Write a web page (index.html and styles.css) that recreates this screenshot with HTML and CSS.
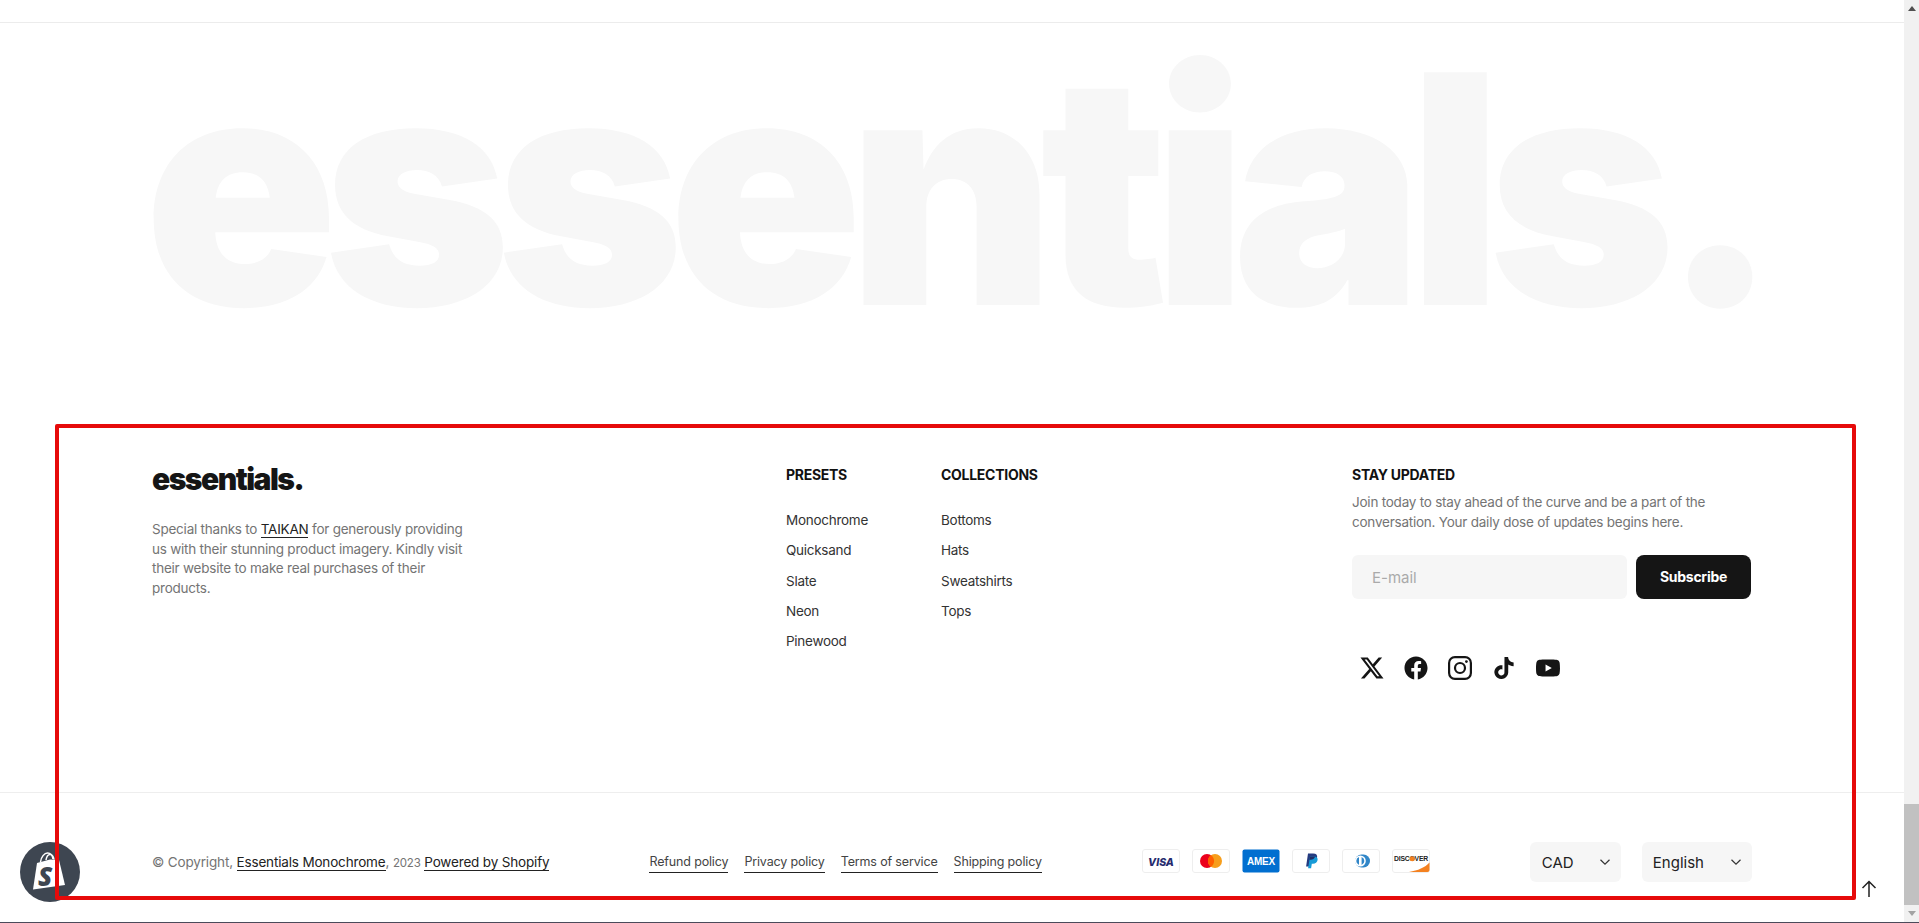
FILE: index.html
```html
<!DOCTYPE html>
<html lang="en">
<head>
<meta charset="utf-8">
<title>Essentials Monochrome</title>
<link rel="stylesheet" href="styles.css">
</head>
<body>
<div class="window">
  <main class="page">
    <div class="top-strip"></div>
    <section class="hero"><div class="hero-word">essentials.</div></section>
    <footer class="footer">
      <div class="footer-main">
        <div class="brand">
          <div class="logo">essentials.</div>
          <p class="muted brand-copy">Special thanks to <a class="link-u" href="#">TAIKAN</a> for generously providing us with their stunning product imagery. Kindly visit their website to make real purchases of their products.</p>
        </div>
        <nav class="menus">
          <div class="menu">
            <h3 class="heading">PRESETS</h3>
            <ul class="menu-list">
              <li><a href="#">Monochrome</a></li>
              <li><a href="#">Quicksand</a></li>
              <li><a href="#">Slate</a></li>
              <li><a href="#">Neon</a></li>
              <li><a href="#">Pinewood</a></li>
            </ul>
          </div>
          <div class="menu">
            <h3 class="heading">COLLECTIONS</h3>
            <ul class="menu-list">
              <li><a href="#">Bottoms</a></li>
              <li><a href="#">Hats</a></li>
              <li><a href="#">Sweatshirts</a></li>
              <li><a href="#">Tops</a></li>
            </ul>
          </div>
        </nav>
        <div class="news">
          <h3 class="heading">STAY UPDATED</h3>
          <p class="muted news-copy">Join today to stay ahead of the curve and be a part of the conversation. Your daily dose of updates begins here.</p>
          <form class="news-form">
            <input class="news-input" type="email" placeholder="E-mail">
            <button class="news-btn" type="button">Subscribe</button>
          </form>
          <div class="social">
            <svg class="s-icon" viewBox="-.5 -.5 25 25"><path d="M18.901 1.153h3.68l-8.04 9.19L24 22.846h-7.406l-5.8-7.584-6.638 7.584H.474l8.6-9.83L0 1.154h7.594l5.243 6.932ZM17.61 20.644h2.039L6.486 3.24H4.298Z"/></svg>
            <svg class="s-icon" viewBox="-.5 -.5 25 25"><path d="M24 12.073c0-6.627-5.373-12-12-12s-12 5.373-12 12c0 5.99 4.388 10.954 10.125 11.854v-8.385H7.078v-3.47h3.047V9.43c0-3.007 1.792-4.669 4.533-4.669 1.312 0 2.686.235 2.686.235v2.953H15.83c-1.491 0-1.956.925-1.956 1.874v2.25h3.328l-.532 3.47h-2.796v8.385C19.612 23.027 24 18.062 24 12.073z"/></svg>
            <svg class="s-icon" viewBox="0 0 24 24"><rect class="ig-line" x="1.100" y="1.100" width="21.800" height="21.800" rx="5.800"/><circle class="ig-line" cx="12" cy="12" r="5"/><circle cx="18.400" cy="5.600" r="1.400"/></svg>
            <svg class="s-icon" viewBox="-1 -.5 26 25"><path d="M12.525.02c1.31-.02 2.61-.01 3.91-.02.08 1.53.63 3.09 1.75 4.17 1.12 1.11 2.7 1.62 4.24 1.79v4.03c-1.44-.05-2.89-.35-4.2-.97-.57-.26-1.1-.59-1.62-.93-.01 2.92.01 5.84-.02 8.75-.08 1.4-.54 2.79-1.35 3.94-1.31 1.92-3.58 3.17-5.91 3.21-1.43.08-2.86-.31-4.08-1.03-2.02-1.19-3.44-3.37-3.65-5.71-.02-.5-.03-1-.01-1.49.18-1.9 1.12-3.72 2.58-4.96 1.66-1.44 3.98-2.13 6.15-1.72.02 1.48-.04 2.96-.04 4.44-.99-.32-2.15-.23-3.02.37-.63.41-1.11 1.04-1.36 1.75-.21.51-.15 1.07-.14 1.61.24 1.64 1.82 3.02 3.5 2.87 1.12-.01 2.19-.66 2.77-1.61.19-.33.4-.67.41-1.06.1-1.79.06-3.57.07-5.36.01-4.03-.01-8.05.02-12.07z"/></svg>
            <svg class="s-icon" viewBox="0 0 24 24"><path d="M23.498 6.186a3.016 3.016 0 0 0-2.122-2.136C19.505 3.545 12 3.545 12 3.545s-7.505 0-9.377.505A3.017 3.017 0 0 0 .502 6.186C0 8.070 0 12 0 12s0 3.930.502 5.814a3.016 3.016 0 0 0 2.122 2.136c1.871.505 9.376.505 9.376.505s7.505 0 9.377-.505a3.015 3.015 0 0 0 2.122-2.136C24 15.930 24 12 24 12s0-3.930-.502-5.814zM9.545 15.568V8.432L15.818 12l-6.273 3.568z"/></svg>
          </div>
        </div>
      </div>
      <div class="footer-bottom">
        <div class="copyright muted">© Copyright, <a class="link-u" href="#">Essentials Monochrome</a>, <span class="year">2023</span> <a class="link-u" href="#">Powered by Shopify</a></div>
        <div class="policies">
          <a class="link-u" href="#">Refund policy</a>
          <a class="link-u" href="#">Privacy policy</a>
          <a class="link-u" href="#">Terms of service</a>
          <a class="link-u" href="#">Shipping policy</a>
        </div>
        <div class="payments">
          <svg class="card" viewBox="0 0 38 24"><rect class="card-bg" x=".5" y=".5" width="37" height="23" rx="2.5"/><text class="visa" x="19" y="16.500" text-anchor="middle">VISA</text></svg>
          <svg class="card" viewBox="0 0 38 24"><rect class="card-bg" x=".5" y=".5" width="37" height="23" rx="2.5"/><circle cx="15" cy="12" r="7" fill="#eb001b"/><circle cx="23" cy="12" r="7" fill="#f79e1b"/><path d="M19 6.200a7 7 0 0 1 0 11.600 7 7 0 0 1 0-11.600z" fill="#ff5f00"/></svg>
          <svg class="card" viewBox="0 0 38 24"><rect x=".5" y=".5" width="37" height="23" rx="2" fill="#016fd0"/><text class="amex" x="19" y="15.800" text-anchor="middle">AMEX</text></svg>
          <svg class="card" viewBox="0 0 38 24"><rect class="card-bg" x=".5" y=".5" width="37" height="23" rx="2.5"/><path d="M16 4.500h5.200c3 0 4.400 1.600 3.900 4.100-.5 2.800-2.500 4.200-5.200 4.200h-1.600l-.8 4.600h-3.400z" fill="#253b80"/><path d="M18 7.500h3.900c2.600 0 4.100 1.200 3.700 3.600-.4 2.400-2.200 3.700-4.600 3.700h-1.200l-.7 4.400h-3z" fill="#179bd7"/><path d="M18 7.500h3.900l1.200.2c-.7 2-2.400 3-4.400 3h-1.400z" fill="#222d65"/></svg>
          <svg class="card" viewBox="0 0 38 24"><rect class="card-bg" x=".5" y=".5" width="37" height="23" rx="2.5"/><path d="M21.500 5.500a6.500 6.500 0 0 1 0 13h-2a6.500 6.500 0 0 1 0-13z" fill="#3086c8"/><circle cx="18.300" cy="12" r="5.500" fill="#fff"/><path d="M17 8v8a4.300 4.300 0 0 1 0-8zM19.600 8a4.300 4.300 0 0 1 0 8z" fill="#3086c8"/></svg>
          <svg class="card" viewBox="0 0 38 24"><rect class="card-bg" x=".5" y=".5" width="37" height="23" rx="2.5"/><path d="M37.500 13.500V21a2 2 0 0 1-2 2H17c9-1.500 16-4.500 20.500-9.500z" fill="#f48120"/><text class="disc" x="19" y="11.500" text-anchor="middle">DISCOVER</text><circle cx="20.300" cy="9.700" r="2.500" fill="#f48120"/></svg>
        </div>
        <div class="selectors">
          <div class="select select-cad"><span>CAD</span><svg class="chev" viewBox="0 0 12 8"><path d="M1.500 1.800 6 6.200l4.500-4.400"/></svg></div>
          <div class="select select-lang"><span>English</span><svg class="chev" viewBox="0 0 12 8"><path d="M1.500 1.800 6 6.200l4.500-4.400"/></svg></div>
        </div>
      </div>
    </footer>
  </main>
  <aside class="scrollbar">
    <span class="sb-arrow sb-up"></span>
    <span class="sb-track"><span class="sb-thumb"></span></span>
    <span class="sb-arrow sb-down"></span>
  </aside>
</div>
<div class="window-edge"></div>
<svg class="to-top" viewBox="0 0 16 18"><path d="M8 17V1.500M1.500 8 8 1.500 14.500 8"/></svg>
<div class="shopify-badge">
  <svg viewBox="0 0 60 60" class="shopify-bag">
    <path d="M17 21 30 17.500 39 18 45 43 13 47.500z" fill="#fff"/>
    <path d="M20.500 20c.5-5 4-9 7-9s5 2.500 5.500 6M26 18c.5-3 2-5.500 4-5.500s3.500 2 4 5" fill="none" stroke="#fff" stroke-width="1.500"/>
    <text class="bag-s" x="25" y="44" text-anchor="middle">S</text>
  </svg>
</div>
<div class="annotation"></div>
</body>
</html>
```

FILE: styles.css
```css
* { box-sizing: border-box; }
html, body { margin: 0; padding: 0; height: 100%; overflow: hidden; background: #fff; }
body { font-family: Inter, "Liberation Sans", sans-serif; color: #222; font-size: 14px; position: relative; }
a { color: inherit; text-decoration: none; }
p, h3, ul { margin: 0; padding: 0; }
ul { list-style: none; }

.window { display: flex; height: 922px; }
.page { flex: 1; min-width: 0; display: flex; flex-direction: column; }
.window-edge { height: 1px; background: #4b4a5a; }

.top-strip { height: 23px; border-bottom: 1px solid #ececec; flex: none; }
.hero { height: 352px; padding: 6px 0 0 144px; flex: none; }
.hero-word { font-size: 320px; line-height: 320px; font-weight: 900; letter-spacing: -0.0475em; color: #f7f7f7; white-space: nowrap; }

.footer { flex: 1; display: flex; flex-direction: column; min-height: 0; }
.footer-main { flex: 1; display: grid; grid-template-columns: 634px 566px 399px; padding: 90px 0 0 152px; border-bottom: 1px solid #eeeeee; }
.logo { font-size: 30px; line-height: 28px; font-weight: 900; letter-spacing: -0.05em; color: #151515; }
.muted { color: #747474; }
.brand-copy { margin-top: 27px; width: 320px; font-size: 13.5px; line-height: 19.6px; letter-spacing: -0.017em; }
.link-u { color: #222; border-bottom: 1px solid #222; padding-bottom: 0; }
.menus { display: flex; gap: 73px; }
.heading { font-size: 14px; line-height: 20px; font-weight: 700; color: #111; letter-spacing: -0.02em; }
.menu-list { margin-top: 25px; display: flex; flex-direction: column; gap: 10.25px; }
.menu-list li { line-height: 20px; font-size: 13.5px; color: #333; letter-spacing: -0.02em; }
.news-copy { margin-top: 7px; font-size: 13.5px; line-height: 20px; letter-spacing: -0.017em; }
.news-form { display: flex; gap: 9px; margin-top: 23px; height: 44px; }
.news-input { width: 275px; height: 44px; border: 0; border-radius: 6px; background: #f6f6f6; padding: 0 20px; font: 15px Inter, sans-serif; outline: 0; }
.news-input::placeholder { color: #aaa; opacity: 1; }
.news-btn { width: 115px; height: 44px; border: 0; border-radius: 8px; background: #151515; color: #fff; font: 700 14px Inter, sans-serif; letter-spacing: -0.02em; padding: 0 0 2px; }
.social { display: flex; gap: 20px; margin: 57px 0 0 8px; }
.s-icon { width: 24px; height: 24px; fill: #151515; display: block; }
.ig-line { fill: none; stroke: #151515; stroke-width: 2.2; }

.footer-bottom { height: 129px; padding: 49px 0 0 152px; display: flex; gap: 100px; align-items: flex-start; }
.copyright { font-size: 13.5px; line-height: 20px; margin-top: 10px; white-space: nowrap; letter-spacing: -0.012em; }
.year { font-size: 11.5px; }
.policies { display: flex; gap: 16px; font-size: 12.5px; line-height: 20px; margin-top: 10px; color: #444; white-space: nowrap; letter-spacing: -0.012em; }
.policies .link-u { color: #444; }
.payments { display: flex; gap: 12px; margin-top: 7px; }
.card { width: 38px; height: 24px; display: block; }
.card-bg { fill: #fff; stroke: #eeeeee; }
.visa { font: italic 800 10.500px Inter, sans-serif; fill: #252a6e; }
.amex { font: 800 10px "Liberation Sans", sans-serif; fill: #fff; letter-spacing: -.2px; }
.disc { font: 700 6.800px "Liberation Sans", sans-serif; fill: #222; letter-spacing: -.2px; }
.selectors { display: flex; gap: 21px; }
.select { height: 40px; background: #f6f6f6; border-radius: 6px; display: flex; align-items: center; justify-content: space-between; padding: 0 10px 0 12px; font-size: 15px; color: #222; }
.select-cad { width: 91px; }
.select-lang { width: 110px; padding-left: 11px; }
.chev { width: 12px; height: 8px; fill: none; stroke: #333; stroke-width: 1.200; display: block; }

.scrollbar { flex: none; width: 15px; background: #f1f1f1; display: flex; flex-direction: column; }
.sb-arrow { height: 17px; flex: none; display: flex; align-items: center; justify-content: center; }
.sb-up::before { content: ""; border: 4px solid transparent; border-top: 0; border-bottom: 5px solid #505050; }
.sb-down::before { content: ""; border: 4px solid transparent; border-bottom: 0; border-top: 5px solid #a3a3a3; }
.sb-track { flex: 1; display: flex; flex-direction: column; justify-content: flex-end; }
.sb-thumb { height: 101px; background: #c1c1c1; }

.to-top { position: absolute; left: 1861px; top: 880px; width: 16px; height: 18px; fill: none; stroke: #222; stroke-width: 1.500; }
.shopify-badge { position: absolute; left: 20px; top: 842px; width: 60px; height: 60px; border-radius: 50%; background: #3e4651; }
.shopify-bag { display: block; width: 60px; height: 60px; }
.bag-s { font: italic 800 26px "Open Sans", sans-serif; fill: #3e4651; }
.annotation { position: absolute; left: 55px; top: 424px; width: 1801px; height: 476px; border: 4px solid #e60a0a; border-radius: 2px; pointer-events: none; }
```
